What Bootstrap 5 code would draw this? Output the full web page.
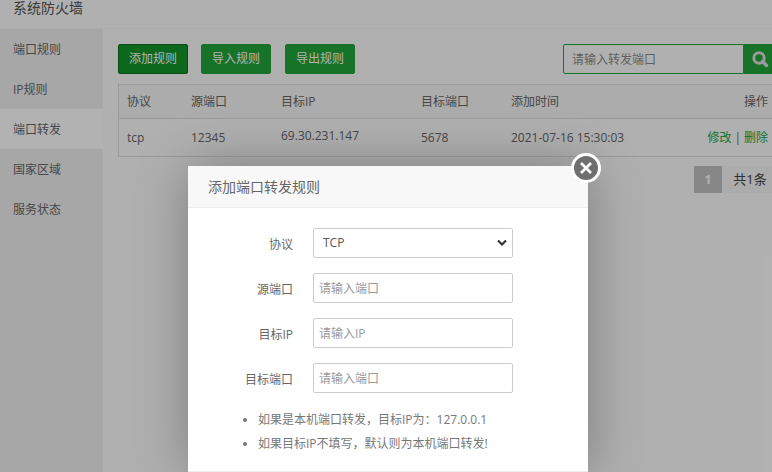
<!DOCTYPE html>
<html lang="zh-CN">
<head>
    <meta charset="UTF-8">
    <title>系统防火墙</title>
    <link href="https://cdn.jsdelivr.net/npm/bootstrap@5.3.0/dist/css/bootstrap.min.css" rel="stylesheet">
    <style>
        html, body { height: 472px; overflow: hidden; }
        body { font-family: "Open Sans", "Noto Sans CJK SC", sans-serif; font-size: 12px; color: #666; background: #fdfdfd; position: relative; }
        .fw-title { height: 29px; padding: 0 13px; font-size: 14px; line-height: 16px; color: #555; background: #fdfdfd; border-bottom: 1px solid #f6f6f6; }
        .fw-body { height: 443px; }
        .fw-side { width: 103px; background: #f0f0f0; flex: none; }
        .fw-side a { display: block; height: 40px; line-height: 41px; padding-left: 13px; color: #666; text-decoration: none; }
        .fw-side a.on { background: #fff; }
        .fw-main { padding: 15px 0 0 15px; flex: 1; min-width: 0; overflow: hidden; }
        .fw-tools { height: 30px; margin-bottom: 10px; }
        .fw-btn { width: 70px; height: 30px; padding: 0; font-size: 12px; line-height: 28px; color: #fff; background: #20a53a; border: 1px solid #20a53a; border-radius: 2px; flex: none; }
        .fw-btn.on { background: #10952a; border-color: #0d6f20; margin-right: 13px; }
        .fw-btn.mid { margin-right: 14px; }
        .fw-search { width: 209px; flex: none; margin-left: auto; }
        .fw-search .form-control { height: 30px; font-size: 12px; padding: 0 8px; border: 1px solid #20a53a; border-radius: 2px 0 0 2px; background: #fdfdfd; color: #666; }
        .fw-search .form-control::placeholder { color: #888; }
        .fw-search-btn { width: 28px; padding-left: 7px; background: #20a53a; display: flex; align-items: center; flex: none; }
        .fw-box { width: 659px; border: 1px solid #ddd; border-radius: 0; }
        .fw-table { margin: 0; font-size: 12px; color: #666; table-layout: fixed; --bs-table-bg: transparent; --bs-table-color: #666; }
        .fw-table th { height: 33px; padding: 1px 8px 0; font-weight: 400; background: #f6f6f6; border-bottom: 1px solid #ddd; vertical-align: middle; }
        .fw-table td { height: 38px; padding: 1px 8px 0; border: 0; vertical-align: middle; background: #fdfdfd; }
        .fw-table a { color: #20a53a; text-decoration: none; }
        .fw-ip { position: relative; top: -2px; }
        .fw-sep { margin: 0 3px; }
        .fw-pager { margin: 9px 0 0 576px; height: 27px; }
        .fw-pager span { display: block; height: 27px; line-height: 27px; text-align: center; flex: none; }
        .fw-pager .cur { width: 28px; background: #c2c2c2; color: #fff; font-weight: 700; }
        .fw-pager .total { width: 56px; background: #f6f6f6; color: #444; font-size: 13px; }
        .fw-shade { position: absolute; inset: 0; background: rgba(0, 0, 0, .3); }
        .fw-layer { position: absolute; left: 188px; top: 166px; width: 400px; height: 306px; background: #fff; box-shadow: 1px 1px 50px rgba(0, 0, 0, .3); border: 0; border-radius: 0; }
        .fw-layer .card-header { height: 42px; flex: none; padding: 0 20px; line-height: 42px; font-size: 14px; color: #666; background: #f8f8f8; border-bottom: 1px solid #eee; border-radius: 0; }
        .fw-close { position: absolute; left: 383px; top: -13px; width: 30px; height: 30px; border-radius: 50%; background: #6f6f6f; border: 3px solid #fff; display: flex; align-items: center; justify-content: center; }
        .fw-form { padding: 20px 0 0; flex: 1; }
        .fw-row { height: 30px; margin-bottom: 15px; }
        .fw-row label { width: 105px; text-align: right; color: #666; padding-top: 4px; flex: none; }
        .fw-row .form-select, .fw-row .form-control { width: 200px; height: 30px; margin-left: 20px; font-size: 12px; border: 1px solid #ccc; border-radius: 2px; color: #555; }
        .fw-row .form-control { padding: 0 5px; }
        .fw-row .form-control::placeholder { color: #999; }
        .fw-row .form-select { padding: 0 24px 0 9px; background-size: 10px 8px; background-position: right 5px center; background-image: url("data:image/svg+xml,%3Csvg xmlns='http://www.w3.org/2000/svg' viewBox='0 0 10 8'%3E%3Cpath d='M1 1.5 5 5.5 9 1.5' fill='none' stroke='%23333' stroke-width='2.2'/%3E%3C/svg%3E"); }
        .fw-tips { margin: 14px 0 0; padding-left: 70px; color: #777; line-height: 24px; list-style: disc; }
        .fw-foot { height: 1px; flex: none; background: #e8eeee; }
    </style>
</head>
<body>
    <div class="fw-title">系统防火墙</div>
    <div class="fw-body d-flex">
        <nav class="fw-side">
            <a href="#">端口规则</a>
            <a href="#">IP规则</a>
            <a href="#" class="on">端口转发</a>
            <a href="#">国家区域</a>
            <a href="#">服务状态</a>
        </nav>
        <div class="fw-main">
            <div class="fw-tools d-flex">
                <button class="btn fw-btn on" type="button">添加规则</button>
                <button class="btn fw-btn mid" type="button">导入规则</button>
                <button class="btn fw-btn" type="button">导出规则</button>
                <div class="fw-search d-flex">
                    <input class="form-control" type="text" placeholder="请输入转发端口">
                    <div class="fw-search-btn">
                        <svg width="18" height="18" viewBox="0 0 18 18"><circle cx="8" cy="8" r="5.2" fill="none" stroke="#ddd" stroke-width="3"/><path d="M11.5 11.5 15.5 15.5" stroke="#ddd" stroke-width="3.4" stroke-linecap="round"/></svg>
                    </div>
                </div>
            </div>
            <div class="fw-box">
                <table class="table fw-table">
                    <colgroup><col style="width:64px"><col style="width:90px"><col style="width:140px"><col style="width:90px"><col style="width:190px"><col style="width:83px"></colgroup>
                    <thead>
                        <tr><th>协议</th><th>源端口</th><th>目标IP</th><th>目标端口</th><th>添加时间</th><th class="text-end">操作</th></tr>
                    </thead>
                    <tbody>
                        <tr><td>tcp</td><td>12345</td><td><span class="fw-ip">69.30.231.147</span></td><td>5678</td><td>2021-07-16 15:30:03</td><td class="text-end text-nowrap"><a href="#">修改</a><span class="fw-sep">|</span><a href="#">删除</a></td></tr>
                    </tbody>
                </table>
            </div>
            <div class="fw-pager d-flex">
                <span class="cur">1</span>
                <span class="total">共1条</span>
            </div>
        </div>
    </div>

    <div class="fw-shade"></div>

    <div class="card fw-layer d-flex flex-column">
        <div class="card-header">添加端口转发规则</div>
        <div class="fw-close">
            <svg width="14" height="14" viewBox="0 0 14 14"><path d="M2 2 12 12M12 2 2 12" stroke="#fff" stroke-width="2.6"/></svg>
        </div>
        <form class="fw-form">
            <div class="fw-row d-flex align-items-center">
                <label>协议</label>
                <select class="form-select"><option>TCP</option></select>
            </div>
            <div class="fw-row d-flex align-items-center">
                <label>源端口</label>
                <input class="form-control" type="text" placeholder="请输入端口">
            </div>
            <div class="fw-row d-flex align-items-center">
                <label>目标IP</label>
                <input class="form-control" type="text" placeholder="请输入IP">
            </div>
            <div class="fw-row d-flex align-items-center">
                <label>目标端口</label>
                <input class="form-control" type="text" placeholder="请输入端口">
            </div>
            <ul class="fw-tips">
                <li>如果是本机端口转发，目标IP为：127.0.0.1</li>
                <li>如果目标IP不填写，默认则为本机端口转发!</li>
            </ul>
        </form>
        <div class="fw-foot"></div>
    </div>

    <script src="https://cdn.jsdelivr.net/npm/bootstrap@5.3.0/dist/js/bootstrap.bundle.min.js"></script>
</body>
</html>
